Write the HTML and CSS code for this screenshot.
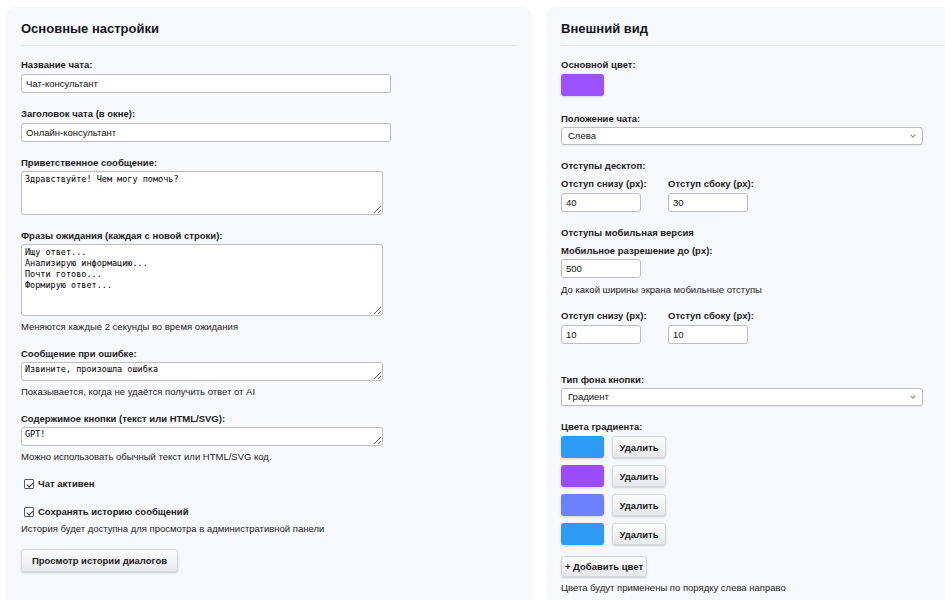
FILE: index.html
```html
<!DOCTYPE html>
<html lang="ru">
<head>
  <meta charset="UTF-8" />
  <meta name="viewport" content="width=device-width, initial-scale=1"/>
  <title>Настройки чата</title>
  <link rel="stylesheet" href="styles.css">
</head>
<body>
  <div class="settings">
    <!-- Основные настройки -->
    <div class="card">
      <h2>Основные настройки</h2>

      <div class="field">
        <label>Название чата:</label>
        <input type="text" class="text-input wide" value="Чат-консультант">
      </div>

      <div class="field">
        <label>Заголовок чата (в окне):</label>
        <input type="text" class="text-input wide" value="Онлайн-консультант">
      </div>

      <div class="field">
        <label>Приветственное сообщение:</label>
        <textarea class="area area-greeting">Здравствуйте! Чем могу помочь?</textarea>
      </div>

      <div class="field">
        <label>Фразы ожидания (каждая с новой строки):</label>
        <textarea class="area area-phrases">Ищу ответ...
Анализирую информацию...
Почти готово...
Формирую ответ...</textarea>
        <p class="help">Меняются каждые 2 секунды во время ожидания</p>
      </div>

      <div class="field">
        <label>Сообщение при ошибке:</label>
        <textarea class="area area-line">Извините, произошла ошибка</textarea>
        <p class="help">Показывается, когда не удаётся получить ответ от AI</p>
      </div>

      <div class="field">
        <label>Содержимое кнопки (текст или HTML/SVG):</label>
        <textarea class="area area-line">GPT!</textarea>
        <p class="help">Можно использовать обычный текст или HTML/SVG код.</p>
      </div>

      <div class="field check-field">
        <label class="check"><input type="checkbox" checked> Чат активен</label>
      </div>

      <div class="field check-field">
        <label class="check"><input type="checkbox" checked> Сохранять историю сообщений</label>
        <p class="help">История будет доступна для просмотра в административной панели</p>
      </div>

      <button class="btn btn-history">Просмотр истории диалогов</button>
    </div>

    <!-- Внешний вид -->
    <div class="card">
      <h2>Внешний вид</h2>

      <div class="field color-field">
        <label>Основной цвет:</label>
        <div class="swatch" style="background: #9b51fb"></div>
      </div>

      <div class="field">
        <label class="tight">Положение чата:</label>
        <div class="select">Слева</div>
      </div>

      <div class="field">
        <label class="group-title">Отступы десктоп:</label>
        <div class="pair">
          <div>
            <label>Отступ снизу (px):</label>
            <input type="text" class="text-input short" value="40">
          </div>
          <div>
            <label>Отступ сбоку (px):</label>
            <input type="text" class="text-input short" value="30">
          </div>
        </div>
      </div>

      <div class="field">
        <label class="group-title">Отступы мобильная версия</label>
        <label class="tight">Мобильное разрешение до (px):</label>
        <input type="text" class="text-input short" value="500">
        <p class="help help-loose">До какой ширины экрана мобильные отступы</p>
        <div class="pair">
          <div>
            <label>Отступ снизу (px):</label>
            <input type="text" class="text-input short" value="10">
          </div>
          <div>
            <label>Отступ сбоку (px):</label>
            <input type="text" class="text-input short" value="10">
          </div>
        </div>
      </div>

      <div class="field spaced">
        <label class="tight">Тип фона кнопки:</label>
        <div class="select">Градиент</div>
      </div>

      <div class="field">
        <label>Цвета градиента:</label>
        <div class="color-list">
          <div class="color-row">
            <div class="swatch" style="background: #2d9bf4"></div>
            <button class="btn btn-small">Удалить</button>
          </div>
          <div class="color-row">
            <div class="swatch" style="background: #9b4dfb"></div>
            <button class="btn btn-small">Удалить</button>
          </div>
          <div class="color-row">
            <div class="swatch" style="background: #6b80fb"></div>
            <button class="btn btn-small">Удалить</button>
          </div>
          <div class="color-row">
            <div class="swatch" style="background: #2d9bf4"></div>
            <button class="btn btn-small">Удалить</button>
          </div>
        </div>
        <button class="btn btn-add">+ Добавить цвет</button>
        <p class="help">Цвета будут применены по порядку слева направо</p>
      </div>
    </div>
  </div>
</body>
</html>
```

FILE: styles.css
```css
body {
  margin: 0;
  padding: 7px 6px;
  background: #ffffff;
  color: #1d1d1f;
  font-family: "Liberation Sans", Arial, sans-serif;
  font-size: 9.5px;
  overflow: hidden;
}

.settings {
  display: flex;
  gap: 14px;
  align-items: flex-start;
}

.card {
  flex: 0 0 526px;
  box-sizing: border-box;
  height: 620px;
  padding: 14px 15px;
  background: #f7f8fc;
  border-radius: 9px;
}

.card h2 {
  margin: 0 0 13px;
  padding-bottom: 8px;
  font-size: 13px;
  line-height: 16px;
  font-weight: bold;
  color: #16161e;
  border-bottom: 1px solid #e4e6ec;
}

.field {
  margin-bottom: 15px;
}

.color-field {
  margin-bottom: 17px;
}

label {
  display: block;
  margin-bottom: 3px;
  font-weight: bold;
  line-height: 12px;
  white-space: nowrap;
}

label.tight {
  margin-bottom: 2px;
}

.group-title {
  margin-bottom: 6px;
}

.text-input,
.area,
.select {
  box-sizing: border-box;
  border: 1px solid #bdbdc2;
  border-radius: 3px;
  background: #ffffff;
  color: #111;
}

.text-input {
  display: block;
  height: 19px;
  padding: 0 4px;
  font-family: "Liberation Sans", Arial, sans-serif;
  font-size: 9.5px;
}

.wide { width: 370px; }
.short { width: 80px; }

.area {
  display: block;
  width: 362px;
  margin: -1px 0 0;
  padding: 2px 3px;
  color: #000;
  font-family: "DejaVu Sans Mono", "Liberation Mono", monospace;
  font-size: 8.5px;
  line-height: 11px;
}

.area-greeting { height: 44px; }
.area-phrases { height: 72px; }
.area-line { height: 19px; padding-top: 1px; }

.help {
  margin: 5px 0 0;
  line-height: 12px;
  color: #1d1d1f;
}

.help-loose {
  margin: 6px 0 14px;
}

.check-field {
  margin-bottom: 16px;
}

.check {
  display: flex;
  align-items: center;
  gap: 4px;
  margin: 0 0 0 3px;
  line-height: 12px;
}

.check input {
  appearance: none;
  position: relative;
  width: 10px;
  height: 10px;
  margin: 0;
  border: 1px solid #5a5a5a;
  border-radius: 1px;
  background: #fff;
}

.check input:checked::after {
  content: "";
  position: absolute;
  left: 2.5px;
  top: 0.5px;
  width: 2.5px;
  height: 5px;
  border: solid #333;
  border-width: 0 1px 1px 0;
  transform: rotate(45deg);
}

.btn {
  display: block;
  box-sizing: border-box;
  padding: 0;
  border: 1px solid #d6d7da;
  border-radius: 3px;
  background: linear-gradient(#fcfcfd, #e7e8ea);
  box-shadow: 0 1px 2px rgba(0, 0, 0, 0.18);
  color: #1d1d1f;
  font-family: "Liberation Sans", Arial, sans-serif;
  font-size: 9.5px;
  font-weight: bold;
  white-space: nowrap;
  cursor: pointer;
}

/* collapses with the 16px below the last checkbox field */
.btn-history {
  width: 157px;
  height: 23px;
  margin-top: -2px;
}

.btn-small {
  width: 54px;
  height: 22px;
}

.btn-add {
  width: 86px;
  height: 21px;
  margin: 11px 0 5px;
}

.select {
  position: relative;
  width: 362px;
  height: 18px;
  padding: 0 6px;
  line-height: 16px;
  box-shadow: 0 1px 1px rgba(0, 0, 0, 0.06);
}

.select::after {
  content: "";
  position: absolute;
  right: 7px;
  top: 5px;
  width: 3px;
  height: 3px;
  border: solid #8a8a8a;
  border-width: 0 1px 1px 0;
  transform: rotate(45deg);
}

.swatch {
  width: 43px;
  height: 22px;
  border-radius: 3px;
  box-shadow: 0 1px 3px rgba(0, 0, 0, 0.15);
}

.pair {
  display: flex;
  gap: 20px;
}

.pair > div {
  width: 87px;
}

.spaced {
  margin-top: 30px;
}

.color-list {
  display: flex;
  flex-direction: column;
  gap: 7px;
}

.color-row {
  display: flex;
  align-items: center;
  gap: 8px;
}
```
